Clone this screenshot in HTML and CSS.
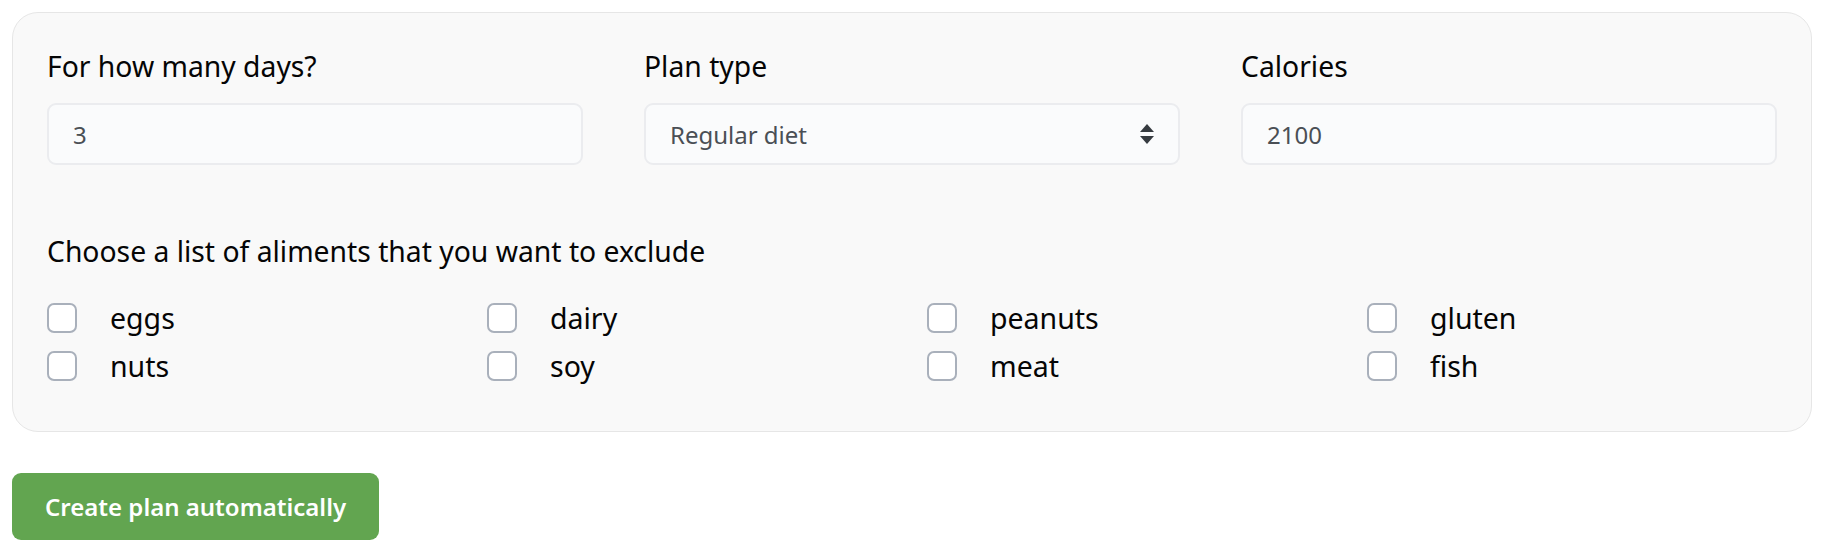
FILE: index.html
```html
<!DOCTYPE html>
<html lang="en">
<head>
    <meta charset="UTF-8">
    <meta name="viewport" content="width=device-width, initial-scale=1.0">
    <title>Meal Plan</title>
    <link rel="stylesheet" href="styles.css">
</head>
<body>
    <div class="plan-form">
        <div class="fields">
            <div class="field">
                <label for="days">For how many days?</label>
                <input type="text" id="days" value="3">
            </div>
            <div class="field">
                <label for="plan-type">Plan type</label>
                <div class="select-wrap">
                    <select id="plan-type">
                        <option>Regular diet</option>
                        <option>Vegetarian</option>
                        <option>Vegan</option>
                    </select>
                    <svg class="select-arrow" width="16" height="20" viewBox="0 0 16 20">
                        <path d="M8 0 L15 8 L1 8 Z" fill="#363b40"/>
                        <path d="M1 12 L15 12 L8 20 Z" fill="#363b40"/>
                    </svg>
                </div>
            </div>
            <div class="field">
                <label for="calories">Calories</label>
                <input type="text" id="calories" value="2100">
            </div>
        </div>

        <h4 class="exclude-title">Choose a list of aliments that you want to exclude</h4>
        <div class="exclude-list">
            <label class="check"><input type="checkbox"><span>eggs</span></label>
            <label class="check"><input type="checkbox"><span>dairy</span></label>
            <label class="check"><input type="checkbox"><span>peanuts</span></label>
            <label class="check"><input type="checkbox"><span>gluten</span></label>
            <label class="check"><input type="checkbox"><span>nuts</span></label>
            <label class="check"><input type="checkbox"><span>soy</span></label>
            <label class="check"><input type="checkbox"><span>meat</span></label>
            <label class="check"><input type="checkbox"><span>fish</span></label>
        </div>
    </div>

    <button class="create-btn">Create plan automatically</button>
</body>
</html>
```

FILE: styles.css
```css
body {
    font-family: "Noto Sans", "Open Sans", sans-serif;
    margin: 0;
    padding: 12px;
    background-color: #fff;
    color: #050505;
}
.plan-form {
    background: #f9f9f9;
    border: 1px solid #e6e6e6;
    border-radius: 26px;
    padding: 34px 34px 44px;
}
.fields {
    display: grid;
    grid-template-columns: repeat(3, 1fr);
    column-gap: 61px;
}
.field label {
    display: block;
    font-size: 28.3px;
    line-height: 39px;
    margin-bottom: 17px;
}
.field input, .field select {
    display: block;
    width: 100%;
    height: 62px;
    box-sizing: border-box;
    padding: 0 24px;
    font-family: inherit;
    font-size: 24px;
    color: #4a4f55;
    background: #fafbfc;
    border: 2px solid #ebecef;
    border-radius: 9px;
    outline: none;
    appearance: none;
}
.select-wrap {
    position: relative;
}
.select-arrow {
    position: absolute;
    right: 25px;
    top: 21px;
    pointer-events: none;
}
.exclude-title {
    font-size: 28.3px;
    font-weight: normal;
    line-height: 39px;
    margin: 67px 0 26px;
}
.exclude-list {
    display: grid;
    grid-template-columns: repeat(4, 440px);
    row-gap: 6px;
}
.check {
    display: flex;
    align-items: center;
    height: 42px;
    font-size: 28.5px;
}
.check input {
    appearance: none;
    width: 30px;
    height: 30px;
    margin: 0 33px 0 0;
    background: #fff;
    border: 2px solid #a9b0bb;
    border-radius: 7px;
}
.create-btn {
    margin-top: 41px;
    height: 67px;
    padding: 0 33px;
    font-family: inherit;
    font-size: 24px;
    font-weight: 600;
    color: #fff;
    background-color: #62a550;
    border: none;
    border-radius: 9px;
    cursor: pointer;
}
```
